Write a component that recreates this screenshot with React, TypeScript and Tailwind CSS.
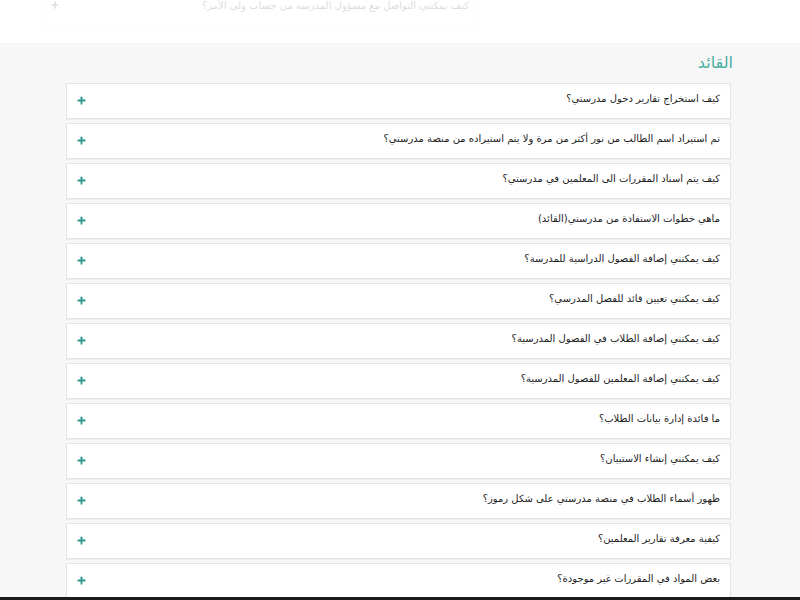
import { Plus } from "lucide-react"

const questions = [
  "كيف استخراج تقارير دخول مدرستي؟",
  "تم استيراد اسم الطالب من نور أكثر من مرة ولا يتم استيراده من منصة مدرستي؟",
  "كيف يتم اسناد المقررات الى المعلمين في مدرستي؟",
  "ماهي خطوات الاستفادة من مدرستي(القائد)",
  "كيف يمكنني إضافة الفصول الدراسية للمدرسة؟",
  "كيف يمكنني تعيين قائد للفصل المدرسي؟",
  "كيف يمكنني إضافة الطلاب في الفصول المدرسية؟",
  "كيف يمكنني إضافة المعلمين للفصول المدرسية؟",
  "ما فائدة إدارة بيانات الطلاب؟",
  "كيف يمكنني إنشاء الاستبيان؟",
  "ظهور أسماء الطلاب في منصة مدرستي على شكل رموز؟",
  "كيفية معرفة تقارير المعلمين؟",
  "بعض المواد في المقررات غير موجودة؟",
]

function Item({ text }: { text: string }) {
  return (
    <div className="h-[36px] bg-white border border-[#e4e4e4] shadow-[0_1px_1px_rgba(0,0,0,0.04)] flex items-center justify-between pr-[10px] pl-[9px]">
      <span className="text-[10px] text-[#222] pb-[6px]">{text}</span>
      <Plus className="w-[11px] h-[11px] text-[#2b9a8d] mb-[2px]" strokeWidth={4} />
    </div>
  )
}

export default function App() {
  return (
    <div dir="rtl" className="w-full h-[600px] overflow-hidden relative bg-[#f7f7f7]" style={{ fontFamily: '"DejaVu Sans", sans-serif' }}>
      <div className="h-[43px] bg-white overflow-hidden">
        <div className="mr-[322px] ml-[45px] h-[28px] flex items-start justify-between pr-[8px] pl-[4px] opacity-25 border border-[#f0f0f0] border-t-0">
          <span className="text-[10px] text-[#777] leading-none pt-[1px]">كيف يمكنني التواصل مع مسؤول المدرسة من حساب ولي الأمر؟</span>
          <Plus className="w-[10px] h-[10px] text-[#888] mt-[0px]" strokeWidth={4} />
        </div>
      </div>
      <div className="mr-[69px] ml-[66px]">
        <h2 className="text-[16px] text-[#48b0a4] pt-[8px] h-[40px] -mr-[2px]">القائد</h2>
        <div className="flex flex-col gap-[4px]">
          {questions.map(q => (
            <Item key={q} text={q} />
          ))}
        </div>
      </div>
      <div className="absolute bottom-0 left-0 right-0 h-[3px] bg-[#1a1a1a]" />
    </div>
  )
}
